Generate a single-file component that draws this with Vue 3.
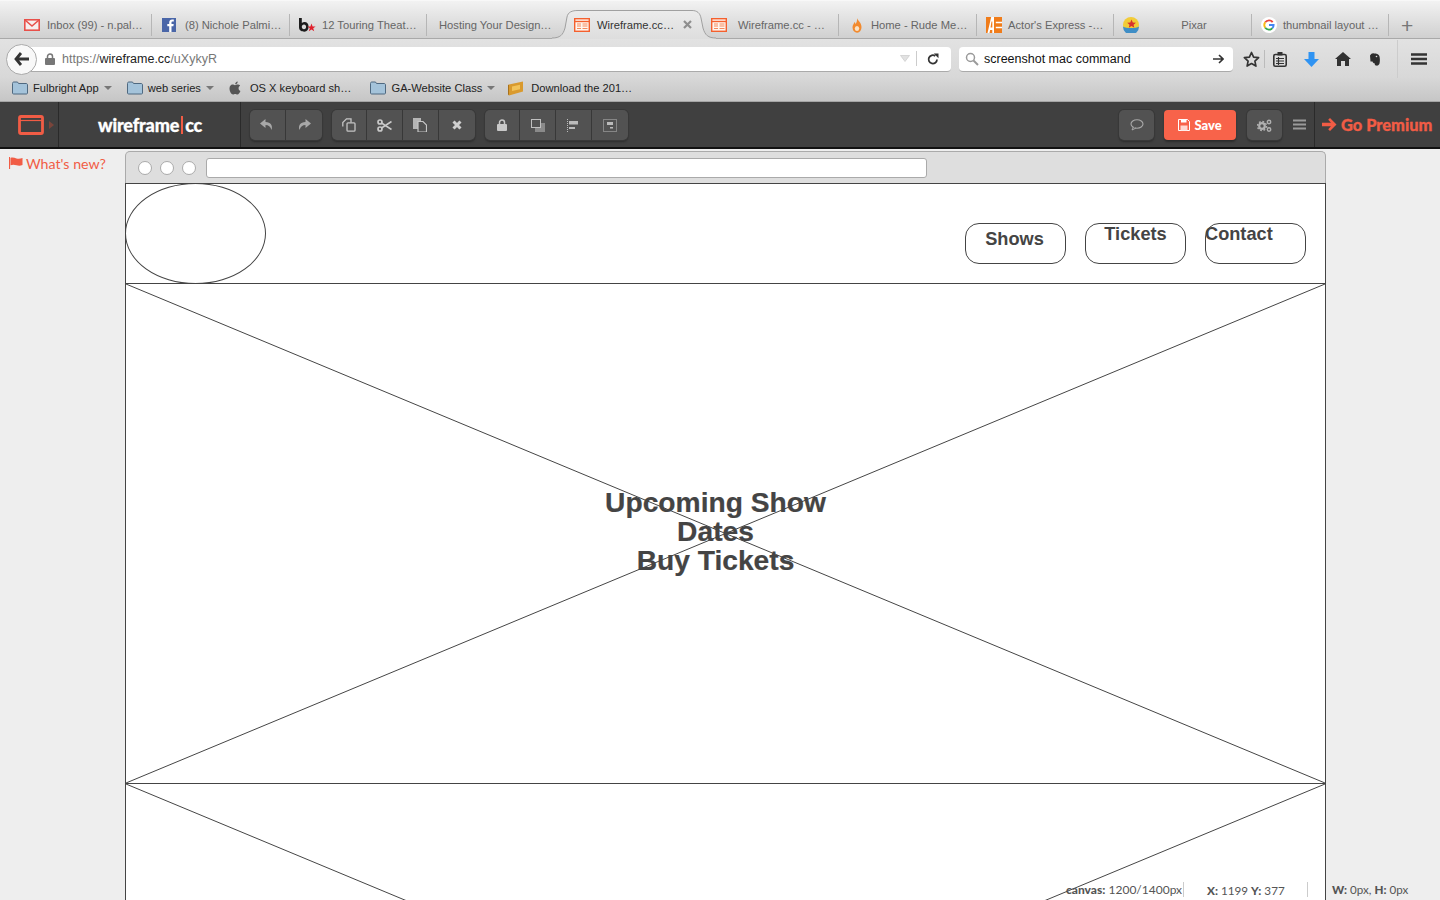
<script setup>
const tabs = [
  { t: 'Inbox (99) - n.pal…', i: 'gmail', w: 138, ti: 7, pad: 10 },
  { t: '(8) Nichole Palmi…', i: 'fb', w: 138, ti: 9, pad: 10 },
  { t: '12 Touring Theat…', i: 'bs', w: 137, ti: 6, pad: 9 },
  { t: 'Hosting Your Design…', i: '', w: 136, ti: 0, pad: 12, nosep: true },
  { t: 'Wireframe.cc…', i: 'wf', w: 142, active: true, ti: 7, pad: 11, nosep: true },
  { t: 'Wireframe.cc - …', i: 'wf', w: 134, ti: 11, pad: 6 },
  { t: 'Home - Rude Me…', i: 'fire', w: 138, ti: 9, pad: 13 },
  { t: "Actor's Express -…", i: 'ae', w: 137, ti: 6, pad: 9 },
  { t: 'Pixar', i: 'ball', w: 138, ti: 0, pad: 9, center: true },
  { t: 'thumbnail layout …', i: 'g', w: 137, ti: 6, pad: 9 },
]
const marks = [
  { t: 'Fulbright App', i: 'folder', caret: true },
  { t: 'web series', i: 'folder', caret: true },
  { t: 'OS X keyboard sh…', i: 'apple' },
  { t: 'GA-Website Class', i: 'folder', caret: true },
  { t: 'Download the 201…', i: 'gold' },
]
</script>

<template>
  <div class="page">
    <div class="tabbar">
      <div
        v-for="tab in tabs"
        :key="tab.t"
        class="tab"
        :class="{ active: tab.active, center: tab.center, nosep: tab.nosep }"
        :style="{ width: tab.w + 'px', paddingLeft: tab.pad + 'px' }"
      >
        <svg v-if="tab.active" class="tab-shape" width="164" height="29" viewBox="0 0 164 29">
          <defs><linearGradient id="tabfill" x1="0" y1="0" x2="0" y2="1"><stop offset="0" stop-color="#ececec"/><stop offset="1" stop-color="#dddddd"/></linearGradient></defs>
          <path d="M0 28C8 28 11 25 13 18L15 7C16 2 20 .5 26 .5H140C145 .5 148 3 149 8L151 18C153 25 156 28 164 28V29H0z" fill="url(#tabfill)"/>
          <path d="M0 28C8 28 11 25 13 18L15 7C16 2 20 .5 26 .5H140C145 .5 148 3 149 8L151 18C153 25 156 28 164 28" fill="none" stroke="#a0a0a0"/>
        </svg>
        <span v-if="tab.i" class="fav">
          <svg v-if="tab.i === 'gmail'" width="16" height="12" viewBox="0 0 16 12"><rect x=".8" y=".8" width="14.400" height="10.400" fill="#f6eeee" stroke="#e8504a" stroke-width="1.600"/><path d="M1 1l7 6 7-6" fill="none" stroke="#e8504a" stroke-width="1.600"/></svg>
          <svg v-else-if="tab.i === 'fb'" width="14" height="14" viewBox="0 0 14 14"><rect width="14" height="14" fill="#4a66a8"/><path d="M9.500 14V8.200h1.900l.3-2.200H9.500V4.600c0-.7.200-1.100 1.100-1.100h1.200v-2c-.5-.1-1.100-.1-1.700-.1C8.400 1.400 7.200 2.500 7.200 4.400V6H5.300v2.200h1.900V14z" fill="#fff"/></svg>
          <svg v-else-if="tab.i === 'bs'" width="17" height="15" viewBox="0 0 17 15"><path d="M0 0h2.800v5C3.600 4.300 4.600 4 5.500 4 8 4 9.600 6 9.600 8.800S7.900 13.700 5.400 13.700C2.300 13.700 0 12.300 0 9.300zM5 6.400c-1.400 0-2.200 1-2.200 2.400s.8 2.500 2.200 2.500 2.100-1.100 2.100-2.500S6.400 6.400 5 6.400z" fill="#1c1c1c"/><path d="M12.500 5.500l1.100 2.900h3l-2.400 1.800 1 3-2.700-1.800-2.700 1.800 1-3-2.400-1.800h3z" fill="#e0202c"/></svg>
          <svg v-else-if="tab.i === 'wf'" width="16" height="14" viewBox="0 0 16 14"><rect x=".7" y=".7" width="14.600" height="12.600" fill="#fff6ef" stroke="#f4602e" stroke-width="1.400"/><path d="M1 3.500h14" stroke="#f4602e" stroke-width="1.400"/><path d="M3 6h4M3 8h4M3 10.500h4M8.500 6h5M8.500 8h5M8.500 10.500h5" stroke="#f58a5e" stroke-width="1.100"/></svg>
          <svg v-else-if="tab.i === 'fire'" width="10" height="15" viewBox="0 0 10 15"><path d="M5 0c.5 2.500 4.500 4.500 4.500 9A4.500 5.500 0 0 1 .5 9.500C.5 7 2 6 2.500 4c.6.800 1 1.400 1.100 2.200C4.700 4.500 5.300 2.500 5 0z" fill="#f28a2e"/><ellipse cx="5" cy="10.500" rx="2.200" ry="2.600" fill="#fbe3c4"/></svg>
          <svg v-else-if="tab.i === 'ae'" width="16" height="16" viewBox="0 0 16 16"><rect width="16" height="16" fill="#f07c1a"/><path d="M5.200 0L1.500 16h2l.6-3h2.200v3H8V0z" fill="#fff"/><path d="M4.500 10.500l1-6h.8v6z" fill="#f07c1a"/><path d="M9.800 5.500H16M9.800 10.500H16" stroke="#fff" stroke-width="1.600"/></svg>
          <svg v-else-if="tab.i === 'ball'" width="16" height="16" viewBox="0 0 16 16"><circle cx="8" cy="8" r="8" fill="#f2cc38"/><path d="M0 9.500a8 8 0 0 0 16 0c-3 2-13 2-16 0z" fill="#3f8ec6"/><path d="M8.500 2.500l1.300 2.900 3.100.3-2.300 2 .7 3-2.800-1.600-2.700 1.600.7-3-2.300-2 3.100-.3z" fill="#d8332e"/></svg>
          <svg v-else-if="tab.i === 'g'" width="16" height="16" viewBox="0 0 16 16"><circle cx="8" cy="8" r="8" fill="#fff"/><path d="M11.700 5.100A4.700 4.700 0 0 0 4.200 5.300" fill="none" stroke="#e8453c" stroke-width="1.900"/><path d="M4.200 5.300a4.700 4.700 0 0 0 0 5.400" fill="none" stroke="#f8bb15" stroke-width="1.900"/><path d="M4.200 10.700a4.700 4.700 0 0 0 7.200.4" fill="none" stroke="#34a751" stroke-width="1.900"/><path d="M8 8h4.600c0 1.300-.4 2.300-1.200 3.100" fill="none" stroke="#4285f4" stroke-width="1.900"/></svg>
        </span>
        <span class="tab-text" :style="{ marginLeft: tab.ti + 'px' }">{{ tab.t }}</span>
        <svg v-if="tab.active" class="close" width="9" height="9" viewBox="0 0 9 9"><path d="M1 1l7 7M8 1L1 8" stroke="#8e8e8e" stroke-width="2.200"/></svg>
      </div>
      <span class="plus">+</span>
    </div>

    <div class="navbar">
      <div class="back">
        <svg width="16" height="14" viewBox="0 0 16 14"><path d="M7 1L2 7l5 6M2.500 7H15" fill="none" stroke="#333" stroke-width="2.800"/></svg>
      </div>
      <div class="urlbar">
        <svg class="lock" width="10" height="12" viewBox="0 0 10 12"><path d="M2.500 5V3.500a2.500 2.500 0 0 1 5 0V5" fill="none" stroke="#777" stroke-width="1.500"/><rect y="5" width="10" height="7" rx="1" fill="#777"/></svg>
        <span class="url"><i>https://</i><b>wireframe.cc</b><i>/uXykyR</i></span>
        <svg class="drop" width="10" height="7" viewBox="0 0 10 7"><path d="M.5.500h9L5 6.500z" fill="#e2e2e2" stroke="#c4c4c4" stroke-width=".6"/></svg>
        <span class="urlsep"></span>
        <svg class="reload" width="12" height="12" viewBox="0 0 12 12"><path d="M10 6.500A4.200 4.200 0 1 1 8.300 3" fill="none" stroke="#333" stroke-width="1.800"/><path d="M6.800.500h4.700v4.700z" fill="#333"/></svg>
      </div>
      <div class="searchbar">
        <svg width="14" height="14" viewBox="0 0 14 14"><circle cx="5.500" cy="5.500" r="4" fill="none" stroke="#9a9a9a" stroke-width="1.500"/><path d="M8.500 8.500l4.500 4.500" stroke="#9a9a9a" stroke-width="2"/></svg>
        <span class="search-text">screenshot mac command</span>
        <svg class="go" width="11" height="10" viewBox="0 0 11 10"><path d="M6 1l4 4-4 4M9.500 5H0" fill="none" stroke="#333" stroke-width="1.600"/></svg>
      </div>
      <div class="tools">
        <svg class="t-star" width="17" height="16" viewBox="0 0 17 16"><path d="M8.500 1.500l2.100 4.600 5 .6-3.700 3.400 1 5-4.400-2.500-4.400 2.500 1-5L1.400 6.700l5-.6z" fill="none" stroke="#333" stroke-width="1.700" stroke-linejoin="round"/></svg>
        <span class="t-sep"></span>
        <svg class="t-clip" width="14" height="15" viewBox="0 0 14 15"><rect x=".8" y="2.500" width="12.400" height="11.700" rx="1.500" fill="none" stroke="#333" stroke-width="1.600"/><rect x="4.500" y="0" width="5" height="3.500" fill="#333"/><path d="M3 6.500h8M3 9h8M3 11.500h8M5.500 5v8" stroke="#333" stroke-width="1.200"/></svg>
        <svg class="t-down" width="15" height="15" viewBox="0 0 15 15"><path d="M4.500 0h6v7H15l-7.500 8L0 7h4.500z" fill="#2f93f2"/></svg>
        <svg class="t-home" width="16" height="14" viewBox="0 0 16 14"><path d="M8 0l8 7h-2v7h-4V9H6v5H2V7H0z" fill="#333"/></svg>
        <svg class="t-ele" width="11" height="13" viewBox="0 0 11 13"><path d="M1 2.500C2.500 1 3 0 5 .5c2 0 5 .5 5.500 3 .5 2 .5 5 0 7-.3 1.500-2 2.500-3.500 2-1 0-1.500-1-1-2-1 0-2-.5-2.500-2H1.500z" fill="#2d2d2d"/><circle cx="7.500" cy="3.500" r=".8" fill="#ddd"/></svg>
        <span class="t-sep2"></span>
        <svg class="t-menu" width="16" height="12" viewBox="0 0 16 12"><path d="M0 1.500h16M0 6h16M0 10.500h16" stroke="#333" stroke-width="2.500"/></svg>
      </div>
    </div>

    <div class="bookmarks">
      <div v-for="m in marks" :key="m.t" class="mark">
        <svg v-if="m.i === 'folder'" width="16" height="14" viewBox="0 0 16 14"><path d="M.5 2.500c0-1 .5-1.500 1.500-1.500h3.500l1 1.500H14c1 0 1.500.5 1.500 1.500v8c0 .8-.5 1-1.500 1H2c-1 0-1.500-.2-1.500-1z" fill="#a4c3da" stroke="#4f6980"/></svg>
        <svg v-else-if="m.i === 'apple'" width="14" height="14" viewBox="0 0 14 14"><path d="M9.500 3.600c-1 0-1.800.6-2.500.6S5.500 3.600 4.500 3.600C2.800 3.700 1.500 5.200 1.500 7.500c0 3 2 6 3.500 6 .8 0 1.200-.5 2.200-.5s1.300.5 2.200.5c1.200 0 2.500-2 3-3.500-2.300-1-2.400-4.300-.3-5.300-.6-.8-1.500-1.100-2.600-1.100z" fill="#555"/><path d="M7.200 3.200C7.100 1.800 8.300.5 9.700.4c.1 1.500-1.100 2.900-2.500 2.800z" fill="#555"/></svg>
        <svg v-else width="16" height="15" viewBox="0 0 16 15"><path d="M1 3.500L15 .5v10L1 14.500z" fill="#d99a2e"/><path d="M4 5.500l8-1.700v4.500L4 10z" fill="#f2c35a"/><path d="M1 3.500v11l-1-1V4z" fill="#a8711c"/></svg>
        <span class="mark-text">{{ m.t }}</span>
        <span v-if="m.caret" class="caret"></span>
      </div>
    </div>

    <div class="apptool">
      <div class="logo-cell">
        <svg width="26" height="20" viewBox="0 0 26 20"><rect x="1.500" y="1.500" width="23" height="17" rx="1.500" fill="none" stroke="#f15c45" stroke-width="2.800"/><path d="M2 5.500h22" stroke="#f15c45" stroke-width="1.200"/></svg>
        <span class="logo-tri"></span>
      </div>
      <div class="brand-cell"><span>wireframe</span><i></i><span>cc</span></div>
      <div class="groups">
        <div class="group">
          <button class="btn"><svg width="14" height="12" viewBox="0 0 14 12"><path d="M5.500 0L0 4.500 5.500 9V6c3 0 5 1.500 6 5 1.500-4-.5-8-6-8z" fill="#a8a8a8"/></svg></button>
          <button class="btn"><svg width="14" height="12" viewBox="0 0 14 12"><path d="M8.500 0L14 4.500 8.500 9V6c-3 0-5 1.500-6 5C1 7 3 3 8.500 3z" fill="#a8a8a8"/></svg></button>
        </div>
        <div class="group g2">
          <button class="btn"><svg width="14" height="14" viewBox="0 0 14 14"><path d="M.8 8.500V4.500L4.500.8H9v4" fill="none" stroke="#c4c4c4" stroke-width="1.300"/><rect x="5" y="4.800" width="8" height="8.400" rx="1" fill="#525252" stroke="#c4c4c4" stroke-width="1.300"/></svg></button>
          <button class="btn"><svg width="15" height="13" viewBox="0 0 15 13"><circle cx="3" cy="3" r="2" fill="none" stroke="#c8c8c8" stroke-width="1.700"/><circle cx="3" cy="10" r="2" fill="none" stroke="#c8c8c8" stroke-width="1.700"/><path d="M4.500 4l10 6.500M4.500 9l10-6.500" stroke="#c8c8c8" stroke-width="1.500"/></svg></button>
          <button class="btn"><svg width="14" height="14" viewBox="0 0 14 14"><rect x="0" y="0" width="8" height="11" fill="#b5b5b5"/><path d="M5 3.500h5l3.500 3.500v7H5z" fill="#525252" stroke="#c6c6c6" stroke-width="1.200"/></svg></button>
          <button class="btn"><svg width="10" height="10" viewBox="0 0 10 10"><path d="M1.500 1.500l7 7M8.500 1.500l-7 7" stroke="#cfcfcf" stroke-width="3"/></svg></button>
        </div>
        <div class="group g3">
          <button class="btn"><svg width="10" height="12" viewBox="0 0 10 12"><path d="M2.500 5V3.500a2.500 2.500 0 0 1 5 0V5" fill="none" stroke="#c8c8c8" stroke-width="1.500"/><rect y="5" width="10" height="7" rx="1" fill="#c8c8c8"/></svg></button>
          <button class="btn"><svg width="14" height="13" viewBox="0 0 14 13"><rect x="4" y="4" width="10" height="9" fill="#8a8a8a"/><rect x=".5" y=".5" width="9" height="8" fill="#525252" stroke="#c0c0c0"/></svg></button>
          <button class="btn"><svg width="12" height="13" viewBox="0 0 12 13"><path d="M.5 0v13" stroke="#bbb" stroke-dasharray="1 1"/><rect x="2" y="2" width="9" height="3.500" fill="#bbb"/><rect x="2" y="8" width="6" height="2" fill="#bbb"/></svg></button>
          <button class="btn"><svg width="14" height="13" viewBox="0 0 14 13"><rect x=".5" y=".5" width="13" height="12" fill="none" stroke="#bbb" stroke-dasharray="1 1"/><rect x="4" y="3" width="6" height="3" fill="#bbb"/><rect x="7" y="8" width="3" height="1.500" fill="#bbb"/></svg></button>
        </div>
      </div>
      <button class="btn solo"><svg width="14" height="12" viewBox="0 0 14 12"><ellipse cx="7" cy="5" rx="6" ry="4.200" fill="none" stroke="#a8a8a8" stroke-width="1.100"/><path d="M3.500 8L2 11l4-2" fill="#525252" stroke="#a8a8a8" stroke-width="1"/></svg></button>
      <button class="save">
        <svg width="12" height="12" viewBox="0 0 12 12"><path d="M.5.500h9l2 2v9H.5z" fill="none" stroke="#fff" stroke-width="1"/><rect x="3" y=".5" width="5.500" height="3" fill="#fff"/><rect x="2.500" y="6.500" width="7" height="5" fill="#ffd9d2"/></svg>
        <span>Save</span>
      </button>
      <button class="btn solo cog"><svg width="15" height="13" viewBox="0 0 15 13"><circle cx="5" cy="7" r="2.800" fill="none" stroke="#b0b0b0" stroke-width="2.200"/><circle cx="5" cy="7" r="4.500" fill="none" stroke="#b0b0b0" stroke-width="1.500" stroke-dasharray="1.800 1.700"/><circle cx="12" cy="3" r="1.700" fill="none" stroke="#b0b0b0" stroke-width="1.400"/><circle cx="12" cy="10.500" r="1.700" fill="none" stroke="#b0b0b0" stroke-width="1.400"/></svg></button>
      <svg class="appmenu" width="13" height="11" viewBox="0 0 13 11"><path d="M0 1.500h13M0 5.500h13M0 9.500h13" stroke="#9a9a9a" stroke-width="2"/></svg>
      <div class="premium">
        <svg width="15" height="15" viewBox="0 0 15 15"><path d="M8 1l6.500 6.500L8 14l-1.800-1.800L9 9.300H0V5.700h9L6.200 2.800z" fill="#f15c45"/></svg>
        <span>Go Premium</span>
      </div>
    </div>

    <div class="workspace">
      <div class="whatsnew">
        <svg width="14" height="12" viewBox="0 0 14 12"><path d="M.5 0v12" stroke="#f15c45" stroke-width="1.200"/><path d="M1.500 1c2-1 4 0 6 .5s4 .3 6-.5v7c-2 1-4 1-6 .3s-4-.8-6 0z" fill="#f15c45"/></svg>
        <span>What's new?</span>
      </div>
      <div class="canvas">
        <div class="wf-title">
          <span class="dot"></span><span class="dot"></span><span class="dot"></span>
          <span class="wf-addr"></span>
        </div>
        <div class="wf-header">
          <span class="ellipse"></span>
          <span class="pill p1">Shows</span>
          <span class="pill p2">Tickets</span>
          <span class="pill p3">Contact</span>
        </div>
        <div class="wf-hero">
          <svg class="cross" viewBox="0 0 1200 500" preserveAspectRatio="none"><path d="M0 0L1200 500M1200 0L0 500" stroke="#444" stroke-width="1" fill="none"/></svg>
          <div class="hero-text">Upcoming Show<br>Dates<br>Buy Tickets</div>
        </div>
        <div class="wf-second">
          <svg class="cross" viewBox="0 0 1200 500" preserveAspectRatio="none"><path d="M0 0L1200 500M1200 0L0 500" stroke="#444" stroke-width="1" fill="none"/></svg>
        </div>
      </div>
      <div class="status">
        <span class="s1"><b>canvas:</b> 1200/1400px</span>
        <span class="sep sep1"></span>
        <span class="s2"><b>X:</b> 1199 <b>Y:</b> 377</span>
        <span class="sep sep2"></span>
        <span class="s3"><b>W:</b> 0px, <b>H:</b> 0px</span>
      </div>
    </div>
  </div>
</template>

<style scoped>
.page {
  width: 1440px;
  height: 900px;
  overflow: hidden;
  display: flex;
  flex-direction: column;
  font-family: "Liberation Sans", Arial, sans-serif;
  background: #eee;
}
.tabbar {
  height: 39px;
  box-sizing: border-box;
  padding: 11px 0 0 14px;
  display: flex;
  background: linear-gradient(#f2f2f2, #d0d0d0);
  border-top: 1px solid #f8f8f8;
  border-bottom: 1px solid #a9a9a9;
}
.tab {
  flex: none;
  box-sizing: border-box;
  border-right: 1px solid #b6b6b6;
  margin-top: 2px;
  height: 22px;
  display: flex;
  align-items: center;
  font-size: 11.200px;
  color: #666;
  white-space: nowrap;
}
.tab.nosep { border-right: none; }
.tab.active {
  position: relative;
  height: 29px;
  margin-top: -2px;
  margin-bottom: -1px;
  color: #333;
}
.tab-shape { position: absolute; left: -11px; top: 0; }
.tab.active .fav, .tab.active .tab-text, .tab.active .close { position: relative; }
.fav { display: flex; align-items: center; flex: none; }
.tab.center .tab-text { flex: 1; text-align: center; padding-right: 2px; }
.close { margin-left: 9px; }
.plus { margin: 0 0 0 12px; font-size: 21px; line-height: 27px; color: #777; }
.navbar {
  height: 38px;
  flex: none;
  display: flex;
  align-items: center;
  padding: 2px 0 0 6px;
  box-sizing: border-box;
  background: linear-gradient(#e2e2e2, #d8d8d8);
  position: relative;
}
.back {
  width: 31px;
  height: 31px;
  border-radius: 50%;
  background: #f8f8f8;
  border: 1px solid #aaa;
  box-sizing: border-box;
  display: flex;
  align-items: center;
  justify-content: center;
  position: relative;
  z-index: 1;
  flex: none;
}
.urlbar {
  width: 921px;
  height: 25px;
  margin-left: -7px;
  background: #fff;
  border-radius: 0 4px 4px 0;
  border-bottom: 1px solid #aaa;
  box-sizing: border-box;
  display: flex;
  align-items: center;
  padding-left: 15px;
  flex: none;
}
.url { font-size: 12.500px; margin-left: 7px; flex: 1; color: #333; }
.url i { font-style: normal; color: #777; }
.url b { font-weight: 400; color: #222; }
.drop { margin-right: 6px; }
.urlsep { width: 1px; height: 15px; background: #ccc; margin-right: 10px; }
.reload { margin-right: 12px; }
.searchbar {
  width: 274px;
  height: 25px;
  margin-left: 8px;
  box-sizing: border-box;
  background: #fff;
  border-radius: 4px;
  border-bottom: 1px solid #aaa;
  display: flex;
  align-items: center;
  padding-left: 6px;
  flex: none;
}
.search-text { font-size: 12.500px; color: #111; margin-left: 5px; flex: 1; }
.go { margin-right: 9px; }
.tools { display: flex; align-items: center; height: 100%; }
.t-star { margin-left: 10px; }
.t-sep { width: 1px; height: 18px; background: #bbb; margin: 0 8px 0 4px; }
.t-clip { margin-right: 17px; }
.t-down { margin-right: 16px; }
.t-home { margin-right: 18px; }
.t-ele { margin-right: 17px; }
.t-sep2 { width: 1px; height: 38px; background: #ccc; margin-right: 13px; }
.bookmarks {
  height: 25px;
  flex: none;
  display: flex;
  align-items: center;
  box-sizing: border-box;
  padding: 0 0 2px 12px;
  background: linear-gradient(#d8d8d8, #c6c6c6);
  border-bottom: 1px solid #a5a5a5;
}
.mark { display: flex; align-items: center; font-size: 11.150px; color: #222; margin-right: 15px; }
.mark-text { margin-left: 5px; }
.mark:nth-child(2) { margin-right: 14px; }
.mark:nth-child(3) { margin-right: 19px; }
.mark:nth-child(3) .mark-text { margin-left: 8px; }
.mark:nth-child(4) { margin-right: 13px; }
.mark:nth-child(5) .mark-text { margin-left: 7px; }
.caret {
  width: 0;
  height: 0;
  margin-left: 5px;
  border-left: 4px solid transparent;
  border-right: 4px solid transparent;
  border-top: 4px solid #777;
}
.apptool {
  height: 47px;
  flex: none;
  display: flex;
  align-items: center;
  box-sizing: border-box;
  background: #404040;
  border-bottom: 2px solid #111;
  font-family: Lato, sans-serif;
}
.logo-cell {
  width: 59px;
  height: 100%;
  flex: none;
  box-sizing: border-box;
  border-right: 1px solid #2a2a2a;
  display: flex;
  align-items: center;
  padding-left: 18px;
}
.logo-tri {
  margin-left: 5px;
  width: 0;
  height: 0;
  border-top: 4px solid transparent;
  border-bottom: 4px solid transparent;
  border-left: 5px solid #7a453b;
}
.brand-cell {
  width: 182px;
  height: 100%;
  flex: none;
  box-sizing: border-box;
  border-right: 1px solid #2a2a2a;
  display: flex;
  align-items: center;
  padding-left: 39px;
  color: #fff;
  font-size: 18px;
  font-weight: 900;
  letter-spacing: -.15px;
  -webkit-text-stroke: .3px #fff;
}
.brand-cell i {
  width: 2px;
  height: 18px;
  margin: 0 2px 0 2px;
  background: #f15c45;
}
.groups { display: flex; flex: 1; padding-left: 9px; margin-top: 1px; }
.group {
  display: flex;
  border-radius: 5px;
  overflow: hidden;
  box-shadow: 0 0 0 1px #383838, 0 2px 2px #2c2c2c;
}
.g2, .g3 { margin-left: 10px; }
.btn {
  width: 35.750px;
  height: 30px;
  padding: 0;
  background: #525252;
  border: none;
  border-right: 1px solid #383838;
  display: flex;
  align-items: center;
  justify-content: center;
  flex: none;
}
.group .btn:last-child { border-right: none; }
.solo {
  width: 35px;
  margin-top: 1px;
  border: none;
  border-radius: 5px;
  box-shadow: 0 0 0 1px #383838, 0 2px 2px #2c2c2c;
}
.save {
  width: 72px;
  height: 30px;
  margin: 1px 11px 0 10px;
  padding: 0;
  background: #f8634a;
  border: none;
  border-radius: 4px;
  color: #fff;
  font-family: Lato, sans-serif;
  font-size: 13px;
  font-weight: 900;
  display: flex;
  align-items: center;
  justify-content: center;
  gap: 4px;
  box-shadow: 0 2px 2px #2c2c2c;
}
.appmenu { margin: 0 8px 0 11px; flex: none; }
.premium {
  width: 126px;
  height: 100%;
  flex: none;
  box-sizing: border-box;
  border-left: 1px solid #2a2a2a;
  display: flex;
  align-items: center;
  padding-left: 7px;
  gap: 4px;
  color: #f15c45;
  font-size: 16.400px;
  font-weight: 900;
  white-space: nowrap;
  -webkit-text-stroke: .3px #f15c45;
}
.workspace {
  position: relative;
  flex: 1;
  min-height: 0;
  display: flex;
  background: #eee;
  font-family: Lato, sans-serif;
}
.whatsnew {
  width: 125px;
  flex: none;
  box-sizing: border-box;
  padding: 6px 0 0 9px;
  display: flex;
  align-items: flex-start;
  gap: 3px;
  color: #f15c45;
  font-size: 14.200px;
  line-height: 18px;
}
.whatsnew svg { margin-top: 2px; }
.canvas {
  width: 1201px;
  margin-top: 2px;
  flex: none;
  box-sizing: border-box;
  font-family: "Liberation Sans", Arial, sans-serif;
  color: #444;
  font-weight: 700;
}
.wf-title {
  height: 32px;
  box-sizing: border-box;
  background: #dedede;
  border: 1px solid #aaa;
  border-bottom: none;
  border-radius: 5px 5px 0 0;
  display: flex;
  align-items: center;
  padding-left: 12px;
}
.dot {
  width: 14px;
  height: 14px;
  box-sizing: border-box;
  border-radius: 50%;
  background: #fff;
  border: 1px solid #aaa;
  margin-right: 8px;
}
.wf-addr {
  width: 721px;
  height: 20px;
  box-sizing: border-box;
  margin-left: 2px;
  background: #fff;
  border: 1px solid #aaa;
  border-radius: 3px;
}
.wf-header {
  position: relative;
  height: 101px;
  box-sizing: border-box;
  background: #fff;
  border: 1px solid #444;
}
.ellipse {
  position: absolute;
  left: -1px;
  top: -1px;
  width: 141px;
  height: 101px;
  box-sizing: border-box;
  border: 1px solid #444;
  border-radius: 50%;
}
.pill {
  position: absolute;
  top: 39px;
  width: 101px;
  height: 41px;
  box-sizing: border-box;
  border: 1px solid #444;
  border-radius: 14px;
  font-size: 18.200px;
  line-height: 29px;
  text-align: center;
}
.p1 { left: 839px; padding: 1px 2px 0 0; }
.p2 { left: 959px; line-height: 21px; }
.p3 { left: 1079px; line-height: 21px; text-align: left; text-indent: -1px; }
.wf-hero, .wf-second {
  position: relative;
  height: 500px;
  box-sizing: border-box;
  background: #fff;
  border: 1px solid #444;
  border-top: none;
}
.wf-second { height: 300px; overflow: hidden; }
.cross {
  position: absolute;
  left: 0;
  top: 0;
  width: 1199px;
  height: 499px;
}
.wf-hero {
  display: flex;
  align-items: center;
  justify-content: center;
}
.hero-text {
  position: relative;
  width: 240px;
  margin: 0 20px 4px 0;
  font-size: 28.200px;
  line-height: 29px;
  text-align: center;
  -webkit-text-stroke: .2px #444;
}
.status {
  position: absolute;
  left: 0;
  top: 733px;
  width: 100%;
  height: 16px;
  font-size: 12px;
  line-height: 16px;
  color: #555;
}
.status span { position: absolute; white-space: nowrap; }
.status b { font-weight: 900; }
.s1 { left: 1066px; }
.sep { width: 1px; height: 15px; background: #ccc; }
.sep1 { left: 1183px; }
.sep2 { left: 1307px; }
.s2 { left: 1207px; font-size: 11.700px; }
.s3 { left: 1332px; font-size: 11.600px; }
</style>

<style>
html, body { margin: 0; background: #eee; }
</style>
